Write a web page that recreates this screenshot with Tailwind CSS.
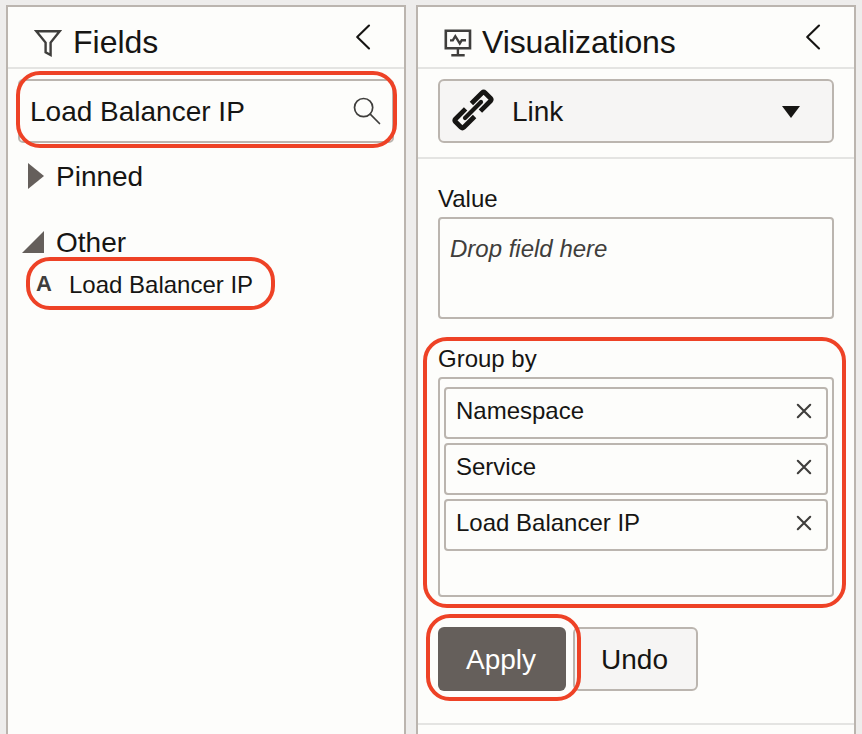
<!DOCTYPE html>
<html lang="en">
<head>
<meta charset="utf-8">
<title>Fields and Visualizations</title>
<script src="https://cdn.jsdelivr.net/npm/@tailwindcss/browser@4"></script>
</head>
<body class="relative w-[862px] h-[734px] overflow-hidden bg-[#eeedec] font-['Liberation_Sans',Arial,sans-serif] text-[#161513]">
<div class="flex gap-[10px] pl-[6px] pt-[5px] h-[740px]">
  <section class="w-[400px] shrink-0 border-2 border-[#bbb5af] bg-[#fdfdfb]">
    <header class="flex h-[62px] border-b-2 border-[#e4e4e2]">
      <svg class="ml-[26px] mt-[21px] shrink-0" width="28" height="30" viewBox="0 0 28 30" fill="none" stroke="#3f3e3c" stroke-width="2.4"><path d="M2.3 3.2H25.7L16.6 14.6V27L11.6 24.2V14.6Z"/></svg>
      <h1 class="ml-[11px] mt-[17px] text-[32px] leading-9">Fields</h1>
      <svg class="ml-auto mr-[32px] mt-[16px]" width="18" height="28" viewBox="0 0 18 28" fill="none" stroke="#161513" stroke-width="2.1" stroke-linecap="round" stroke-linejoin="round"><path d="M15 2.5L3.2 14L15 25.5"/></svg>
    </header>
    <div class="ml-[10px] mt-[10px] flex h-[64px] w-[376px] items-center rounded-[5px] border-2 border-[#bbb5af] pl-[10px] pr-[10px]">
      <span class="pt-0.5 text-[28px] leading-8">Load Balancer IP</span>
      <svg class="ml-auto" width="30" height="30" viewBox="0 0 30 30" fill="none" stroke="#3f3e3c" stroke-width="1.7" stroke-linecap="round"><circle cx="11.6" cy="11.6" r="9.1"/><path d="M18.2 18.2L27.5 27.5"/></svg>
    </div>
    <div class="mt-[15px] flex h-9 items-center pl-[20px] text-[28px] leading-8">
      <svg width="16" height="26" viewBox="0 0 16 26"><path d="M0 0L16 13L0 26Z" fill="#655f5b"/></svg>
      <span class="ml-[12px] pt-0.5">Pinned</span>
    </div>
    <div class="mt-[30px] flex h-9 items-center pl-[14px] text-[28px] leading-8">
      <svg width="22" height="22" viewBox="0 0 22 22"><path d="M22 0V22H0Z" fill="#655f5b"/></svg>
      <span class="ml-[12px] pt-0.5">Other</span>
    </div>
    <div class="mt-[11px] flex h-7 pl-[28px]">
      <span class="-mt-px w-[33px] text-[22px] leading-7 font-bold text-[#3f3e3c]">A</span>
      <span class="text-[24px] leading-7">Load Balancer IP</span>
    </div>
  </section>

  <section class="w-[440px] shrink-0 border-2 border-[#bbb5af] bg-[#fdfdfb]">
    <header class="flex h-[62px] border-b-2 border-[#e4e4e2]">
      <svg class="ml-[26px] mt-[22px] shrink-0" width="28" height="28" viewBox="0 0 28 28" fill="none" stroke="#3f3e3c"><path stroke-width="2.6" d="M1.8 1.8H26V19.2H1.8Z"/><path stroke-width="2.4" d="M6 11.4H8.8L11.3 7.2L15.8 14.4L17.8 11.2H22M13.9 19V25.8M7.3 26.2H20.7"/></svg>
      <h1 class="ml-[10px] mt-[17px] text-[32px] leading-9 tracking-[-0.1px]">Visualizations</h1>
      <svg class="ml-auto mr-[32px] mt-[16px]" width="18" height="28" viewBox="0 0 18 28" fill="none" stroke="#161513" stroke-width="2.1" stroke-linecap="round" stroke-linejoin="round"><path d="M15 2.5L3.2 14L15 25.5"/></svg>
    </header>
    <div class="h-[90px] border-b-2 border-[#e4e4e2] px-[20px] pt-[10px]">
      <div class="flex h-[64px] items-center rounded-[6px] border-2 border-[#bbb5af] bg-[#f6f5f4] pl-[11px] pr-[32px]">
        <svg class="-mt-[3px]" width="44" height="44" viewBox="0 0 44 44" fill="none" stroke="#161513" stroke-width="4.8" stroke-linejoin="round">
          <path d="M20.4 15.5L31.2 4.7Q32.6 3.4 34 4.7L39.5 10.2Q40.8 11.6 39.5 13L29.4 23.1"/>
          <path d="M23.6 28.5L12.8 39.3Q11.4 40.6 10 39.3L4.5 33.8Q3.2 32.4 4.5 31L14.6 20.9"/>
          <path d="M14 30L30 14" stroke-linecap="round" stroke-width="4.2"/>
        </svg>
        <span class="ml-[17px] pt-0.5 text-[28px] leading-8">Link</span>
        <svg class="ml-auto mt-[2px]" width="18" height="12" viewBox="0 0 18 12"><path d="M0 0H18L9 12Z" fill="#161513"/></svg>
      </div>
    </div>
    <div class="flex flex-col px-[20px] pt-[26px] text-[24px] leading-7">
      <div>Value</div>
      <div class="mt-[4px] h-[102px] rounded-[4px] border-2 border-[#bbb5af] pl-[10px] pt-[16px] italic text-[#403e3b]">Drop field here</div>
      <div class="mt-[26px]">Group by</div>
      <div class="mt-[4px] flex h-[220px] flex-col gap-1 rounded-[4px] border-2 border-[#bbb5af] px-1 pt-2">
        <div class="flex h-[52px] items-center justify-between rounded-[4px] border-2 border-[#bbb5af] pl-[10px] pr-[14px] pb-[4px]"><span>Namespace</span><svg width="16" height="16" viewBox="0 0 16 16" stroke="#3f3e3c" stroke-width="2.1" stroke-linecap="round"><path d="M1.8 1.8L14.2 14.2M14.2 1.8L1.8 14.2"/></svg></div>
        <div class="flex h-[52px] items-center justify-between rounded-[4px] border-2 border-[#bbb5af] pl-[10px] pr-[14px] pb-[4px]"><span>Service</span><svg width="16" height="16" viewBox="0 0 16 16" stroke="#3f3e3c" stroke-width="2.1" stroke-linecap="round"><path d="M1.8 1.8L14.2 14.2M14.2 1.8L1.8 14.2"/></svg></div>
        <div class="flex h-[52px] items-center justify-between rounded-[4px] border-2 border-[#bbb5af] pl-[10px] pr-[14px] pb-[4px]"><span>Load Balancer IP</span><svg width="16" height="16" viewBox="0 0 16 16" stroke="#3f3e3c" stroke-width="2.1" stroke-linecap="round"><path d="M1.8 1.8L14.2 14.2M14.2 1.8L1.8 14.2"/></svg></div>
      </div>
      <div class="mt-[30px] flex gap-[7px] text-[28px] leading-8">
        <button class="h-[64px] w-[128px] rounded-[6px] bg-[#655f5b] pt-0.5 pr-0.5 text-white">Apply</button>
        <button class="h-[64px] w-[125px] rounded-[6px] border-2 border-[#bbb5af] bg-[#f6f5f4] pt-0.5 pr-0.5">Undo</button>
      </div>
    </div>
    <div class="mt-[32px] h-0.5 bg-[#e4e4e2]"></div>
  </section>
</div>

<!-- Callout outlines -->
<div class="absolute left-[16px] top-[71px] h-[77px] w-[381px] rounded-[24px] border-4 border-[#ee4226]"></div>
<div class="absolute left-[26px] top-[257px] h-[53px] w-[249px] rounded-[24px] border-4 border-[#ee4226]"></div>
<div class="absolute left-[423px] top-[337px] h-[271px] w-[423px] rounded-[24px] border-4 border-[#ee4226]"></div>
<div class="absolute left-[426px] top-[614px] h-[87px] w-[155px] rounded-[24px] border-4 border-[#ee4226]"></div>
</body>
</html>
